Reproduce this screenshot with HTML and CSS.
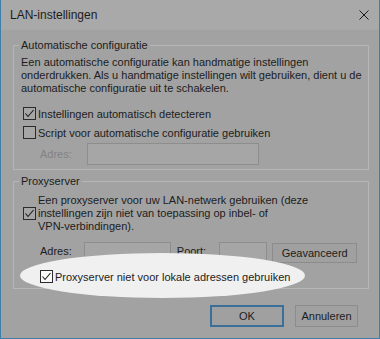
FILE: index.html
```html
<!DOCTYPE html>
<html lang="nl">
<head>
    <meta charset="UTF-8">
    <meta name="viewport" content="width=device-width, initial-scale=1.0">
    <title>LAN-instellingen</title>
    <link rel="stylesheet" href="styles.css">
</head>
<body>
    <div class="window">
        <div class="titlebar">
            <span class="title">LAN-instellingen</span>
            <svg class="close" width="10" height="10" viewBox="0 0 10 10">
                <path d="M0.5 0.5 L9.5 9.5 M9.5 0.5 L0.5 9.5" stroke="#1a1a1a" stroke-width="1" fill="none"/>
            </svg>
        </div>

        <fieldset class="group group-auto">
            <legend>Automatische configuratie</legend>
            <p class="info">Een automatische configuratie kan handmatige instellingen<br>onderdrukken. Als u handmatige instellingen wilt gebruiken, dient u de<br>automatische configuratie uit te schakelen.</p>
            <div class="check-row">
                <span class="cb">
                    <svg width="11" height="11" viewBox="0 0 11 11"><path d="M1.5 5.5 L4 8.5 L9.5 2" stroke="#1a1a1a" stroke-width="1.1" fill="none"/></svg>
                </span>
                <span>Instellingen automatisch detecteren</span>
            </div>
            <div class="check-row">
                <span class="cb"></span>
                <span>Script voor automatische configuratie gebruiken</span>
            </div>
            <div class="field-row disabled">
                <span class="field-label">Adres:</span>
                <span class="input input-script"></span>
            </div>
        </fieldset>

        <fieldset class="group group-proxy">
            <legend>Proxyserver</legend>
            <div class="check-row multi">
                <span class="cb">
                    <svg width="11" height="11" viewBox="0 0 11 11"><path d="M1.5 5.5 L4 8.5 L9.5 2" stroke="#1a1a1a" stroke-width="1.1" fill="none"/></svg>
                </span>
                <span>Een proxyserver voor uw LAN-netwerk gebruiken (deze<br>instellingen zijn niet van toepassing op inbel- of<br>VPN-verbindingen).</span>
            </div>
            <div class="field-row proxy-row">
                <span class="field-label">Adres:</span>
                <span class="input input-address"></span>
                <span class="field-label port-label">Poort:</span>
                <span class="input input-port"></span>
                <span class="btn btn-advanced">Geavanceerd</span>
            </div>
            <div class="highlight-wrap">
                <div class="highlight"></div>
                <div class="check-row local-row">
                    <span class="cb light">
                        <svg width="11" height="11" viewBox="0 0 11 11"><path d="M1.5 5.5 L4 8.5 L9.5 2" stroke="#1a1a1a" stroke-width="1.1" fill="none"/></svg>
                    </span>
                    <span>Proxyserver niet voor lokale adressen gebruiken</span>
                </div>
            </div>
        </fieldset>

        <div class="actions">
            <span class="btn btn-ok">OK</span>
            <span class="btn btn-cancel">Annuleren</span>
        </div>
    </div>
</body>
</html>
```

FILE: styles.css
```css
body {
    margin: 0;
    font-family: "Liberation Sans", Arial, sans-serif;
    font-size: 11px;
    color: #1c1c1c;
    background: #a2a2a2;
}
.window {
    width: 380px;
    height: 339px;
    box-sizing: border-box;
    border: 1px solid #3f7ea9;
    border-top: none;
    background: #a2a2a2;
    overflow: hidden;
}
.titlebar {
    height: 30px;
    background: #a9a9a9;
    display: flex;
    align-items: center;
    justify-content: space-between;
    padding: 0 10px 0 9px;
}
.title {
    font-size: 12px;
}
.close {
    display: block;
}
.group {
    border: 1px solid #b6b6b6;
    margin: 0 10px 0 12px;
    padding: 0 8px 4px 7px;
    min-inline-size: 0;
}
.group legend {
    padding: 0 2px;
    margin-left: -2px;
    line-height: 16px;
}
.group-auto {
    margin-top: 7px;
}
.group-proxy {
    margin-top: 3px;
    padding-bottom: 2px;
}
.info {
    margin: 3px 0 9px 0;
    line-height: 13px;
    white-space: nowrap;
}
.check-row {
    display: flex;
    align-items: center;
    gap: 2px;
    padding-left: 2px;
    height: 19px;
}
.check-row.multi {
    height: auto;
    line-height: 13px;
    margin-top: 5px;
    white-space: nowrap;
}
.cb {
    width: 13px;
    height: 13px;
    box-sizing: border-box;
    border: 1px solid #2b2b2b;
    background: #a6a6a6;
    flex-shrink: 0;
    display: flex;
    align-items: center;
    justify-content: center;
}
.cb svg {
    display: block;
}
.cb.light {
    background: #fafafa;
}
.field-row {
    display: flex;
    align-items: center;
    padding-left: 19px;
    margin-top: 1px;
}
.disabled .field-label {
    color: #838383;
}
.input {
    box-sizing: border-box;
    border: 1px solid #8d8d8d;
    background: #a6a6a6;
    display: block;
}
.input-script {
    width: 172px;
    height: 22px;
    margin-left: 15px;
}
.proxy-row {
    margin-top: 9px;
    align-items: flex-start;
}
.proxy-row .field-label {
    line-height: 19px;
}
.input-address {
    width: 87px;
    height: 19px;
    margin-left: 12px;
}
.port-label {
    margin-left: 6px;
}
.input-port {
    width: 48px;
    height: 19px;
    margin-left: 13px;
}
.btn {
    box-sizing: border-box;
    border: 1px solid #8c8c8c;
    background: #a0a0a0;
    display: flex;
    align-items: center;
    justify-content: center;
}
.btn-advanced {
    width: 85px;
    height: 20px;
    margin: 1px 0 0 5px;
}
.highlight-wrap {
    position: relative;
    margin-top: 4px;
}
.highlight {
    position: absolute;
    left: -1px;
    top: -14px;
    width: 285px;
    height: 45px;
    border-radius: 50%;
    background: #f0f0f0;
}
.local-row {
    position: relative;
    padding-left: 19px;
    gap: 2px;
}
.actions {
    display: flex;
    justify-content: flex-end;
    gap: 11px;
    padding: 16px 21px 0 0;
}
.btn-ok {
    width: 74px;
    height: 22px;
    border: 2px solid #3a6f99;
}
.btn-cancel {
    width: 63px;
    height: 22px;
}
```
